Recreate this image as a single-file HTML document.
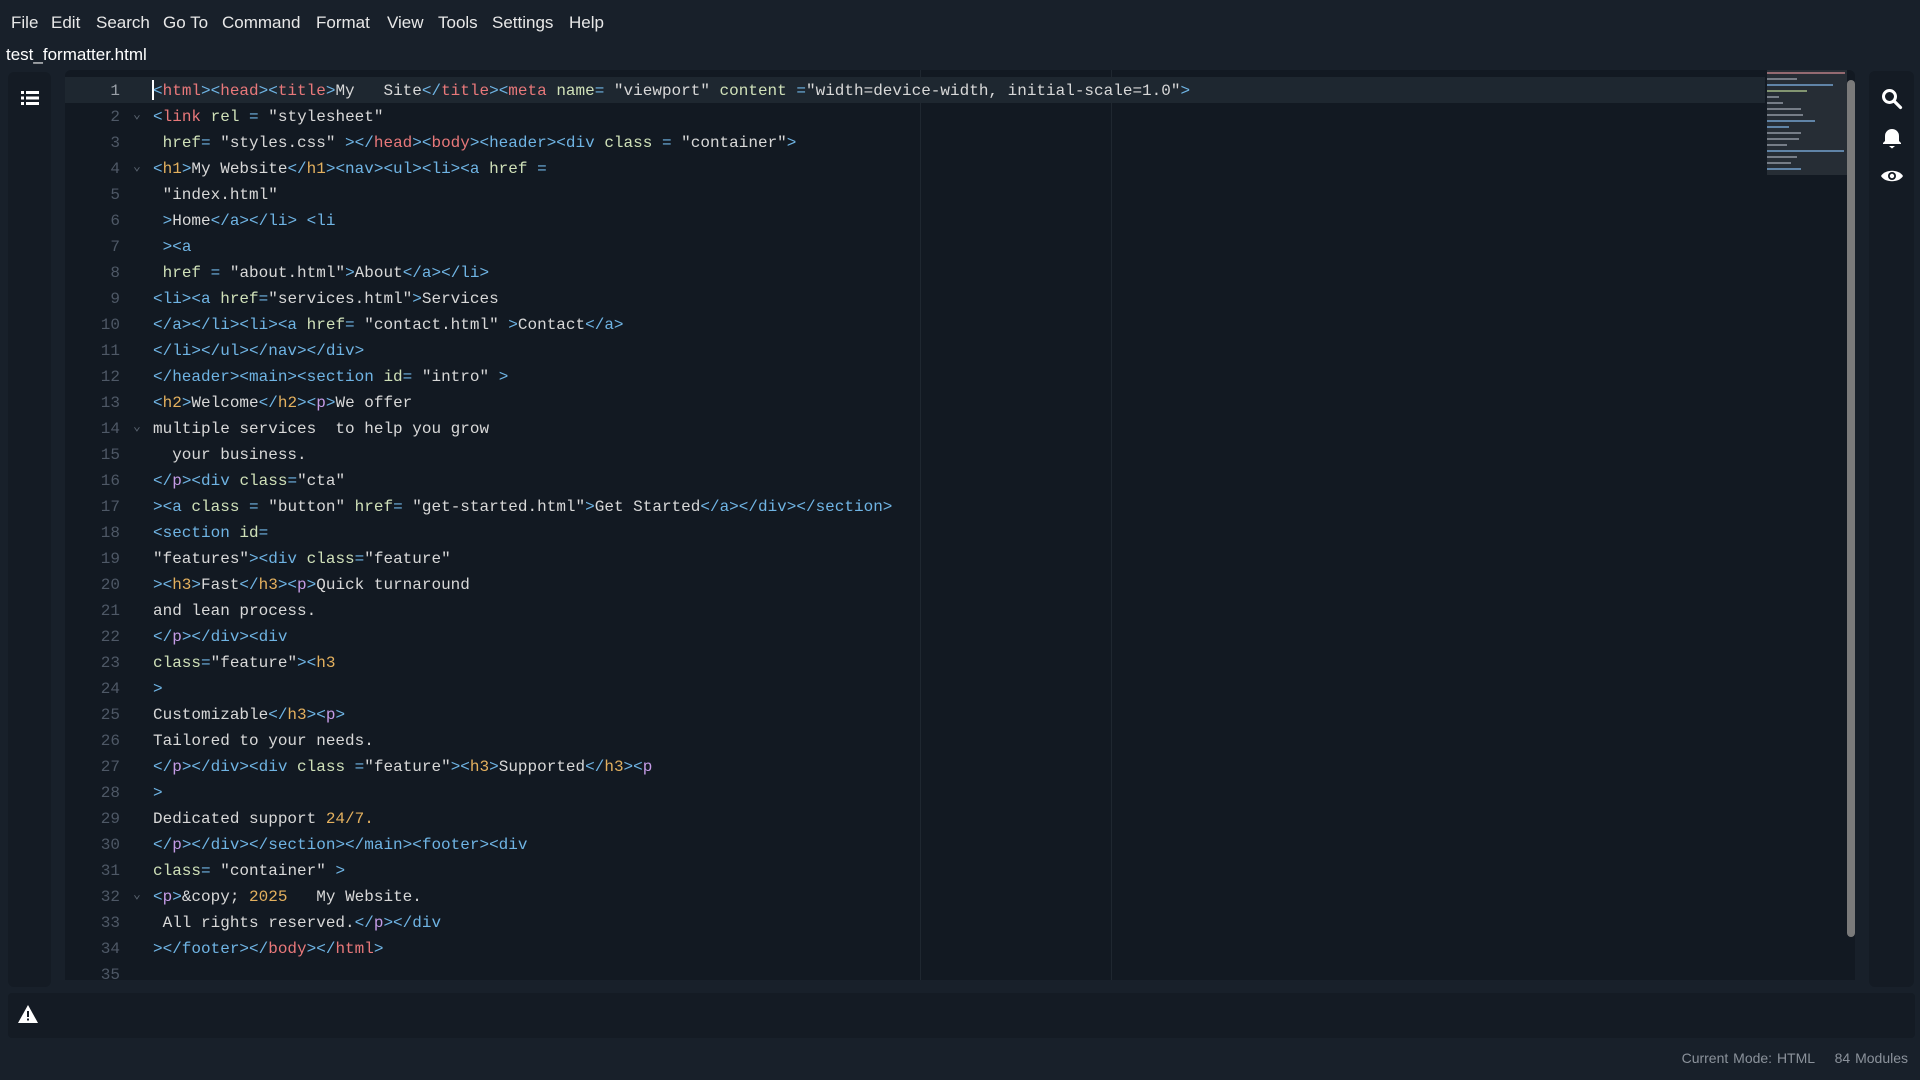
<!DOCTYPE html>
<html><head><meta charset="utf-8"><style>
*{margin:0;padding:0;box-sizing:border-box}
body{width:1920px;height:1080px;background:#18202a;overflow:hidden;position:relative;font-family:"Liberation Sans",sans-serif;color:#e6e6e6}
.m{position:absolute;top:13px;font-size:17px;color:#e8e8e8}
#fn{position:absolute;left:6px;top:45px;font-size:17px;color:#fff}
#lp{position:absolute;left:8px;top:72px;width:43px;height:915px;background:#141b24;border-radius:6px}
#ed{position:absolute;left:65px;top:70px;width:1790px;height:910px;background:#121922;border-radius:6px 6px 0 0;overflow:hidden}
#hl{position:absolute;left:0;top:7px;width:1700px;height:26px;background:#1e2730}
.ru{position:absolute;top:0;width:1px;height:910px;background:#1f2730}
#code{position:absolute;left:0;top:8px;font-family:"Liberation Mono",monospace;font-size:16px}
.l{height:26px;line-height:26px;position:relative;white-space:pre;color:#d8d8d8}
.n{position:absolute;left:0;width:55px;text-align:right;color:#4e5866}
.f{position:absolute;left:68px;top:-2px;color:#5a6470;font-size:13px}
.c{position:absolute;left:88px}
.t{color:#6fb4e4}.r{color:#e8787a}.o{color:#e3b05e}.p{color:#c49be6}.a{color:#cfe0b8}
#mm{position:absolute;left:1767px;top:70px;width:80px;height:105px;background:#262d35}
#sb{position:absolute;left:1847px;top:80px;width:8px;height:857px;background:#7a7a7a;border-radius:4px}
#rp{position:absolute;left:1869px;top:71px;width:45px;height:916px;background:#141b24;border-radius:6px}
#bp{position:absolute;left:8px;top:993px;width:1907px;height:45px;background:#141b24;border-radius:4px}
#st{position:absolute;right:12px;top:1050px;font-size:14px;color:#8b929b;word-spacing:1px}
</style></head><body>
<div class="m" style="left:11px">File</div><div class="m" style="left:51px">Edit</div><div class="m" style="left:96px">Search</div><div class="m" style="left:163px">Go To</div><div class="m" style="left:222px">Command</div><div class="m" style="left:316px">Format</div><div class="m" style="left:387px">View</div><div class="m" style="left:438px">Tools</div><div class="m" style="left:492px">Settings</div><div class="m" style="left:569px">Help</div>
<div id="fn">test_formatter.html</div>
<div id="lp"><svg style="position:absolute;left:13px;top:19px" width="18" height="14" viewBox="0 0 18 14" fill="#fff"><rect x="0" y="0" width="3" height="3"/><rect x="5" y="0" width="13" height="3"/><rect x="0" y="5.5" width="3" height="3"/><rect x="5" y="5.5" width="13" height="3"/><rect x="0" y="11" width="3" height="3"/><rect x="5" y="11" width="13" height="3"/></svg></div>
<div id="ed"><div id="hl"></div><div class="ru" style="left:855px"></div><div class="ru" style="left:1046px"></div>
<div style="position:absolute;left:87px;top:10px;width:2px;height:20px;background:#fff"></div>
<div id="code">
<div class="l"><span class="n" style="color:#9aa0a8">1</span><span class="c"><span class="t">&lt;</span><span class="r">html</span><span class="t">&gt;&lt;</span><span class="r">head</span><span class="t">&gt;&lt;</span><span class="r">title</span><span class="t">&gt;</span>My   Site<span class="t">&lt;/</span><span class="r">title</span><span class="t">&gt;&lt;</span><span class="r">meta</span> <span class="a">name</span><span class="t">=</span> "viewport" <span class="a">content</span> <span class="t">=</span>"width=device-width, initial-scale=1.0"<span class="t">&gt;</span></span></div>
<div class="l"><span class="n">2</span><span class="f">⌄</span><span class="c"><span class="t">&lt;</span><span class="r">link</span> <span class="a">rel</span> <span class="t">=</span> "stylesheet"</span></div>
<div class="l"><span class="n">3</span><span class="c"> <span class="a">href</span><span class="t">=</span> "styles.css" <span class="t">&gt;&lt;/</span><span class="r">head</span><span class="t">&gt;&lt;</span><span class="r">body</span><span class="t">&gt;&lt;header&gt;&lt;div</span> <span class="a">class</span> <span class="t">=</span> "container"<span class="t">&gt;</span></span></div>
<div class="l"><span class="n">4</span><span class="f">⌄</span><span class="c"><span class="t">&lt;</span><span class="o">h1</span><span class="t">&gt;</span>My Website<span class="t">&lt;/</span><span class="o">h1</span><span class="t">&gt;&lt;nav&gt;&lt;ul&gt;&lt;li&gt;&lt;a</span> <span class="a">href</span> <span class="t">=</span></span></div>
<div class="l"><span class="n">5</span><span class="c"> "index.html"</span></div>
<div class="l"><span class="n">6</span><span class="c"> <span class="t">&gt;</span>Home<span class="t">&lt;/a&gt;&lt;/li&gt;</span> <span class="t">&lt;li</span></span></div>
<div class="l"><span class="n">7</span><span class="c"> <span class="t">&gt;&lt;a</span></span></div>
<div class="l"><span class="n">8</span><span class="c"> <span class="a">href</span> <span class="t">=</span> "about.html"<span class="t">&gt;</span>About<span class="t">&lt;/a&gt;&lt;/li&gt;</span></span></div>
<div class="l"><span class="n">9</span><span class="c"><span class="t">&lt;li&gt;&lt;a</span> <span class="a">href</span><span class="t">=</span>"services.html"<span class="t">&gt;</span>Services</span></div>
<div class="l"><span class="n">10</span><span class="c"><span class="t">&lt;/a&gt;&lt;/li&gt;&lt;li&gt;&lt;a</span> <span class="a">href</span><span class="t">=</span> "contact.html" <span class="t">&gt;</span>Contact<span class="t">&lt;/a&gt;</span></span></div>
<div class="l"><span class="n">11</span><span class="c"><span class="t">&lt;/li&gt;&lt;/ul&gt;&lt;/nav&gt;&lt;/div&gt;</span></span></div>
<div class="l"><span class="n">12</span><span class="c"><span class="t">&lt;/header&gt;&lt;main&gt;&lt;section</span> <span class="a">id</span><span class="t">=</span> "intro" <span class="t">&gt;</span></span></div>
<div class="l"><span class="n">13</span><span class="c"><span class="t">&lt;</span><span class="o">h2</span><span class="t">&gt;</span>Welcome<span class="t">&lt;/</span><span class="o">h2</span><span class="t">&gt;&lt;</span><span class="p">p</span><span class="t">&gt;</span>We offer</span></div>
<div class="l"><span class="n">14</span><span class="f">⌄</span><span class="c">multiple services  to help you grow</span></div>
<div class="l"><span class="n">15</span><span class="c">  your business.</span></div>
<div class="l"><span class="n">16</span><span class="c"><span class="t">&lt;/</span><span class="p">p</span><span class="t">&gt;&lt;div</span> <span class="a">class</span><span class="t">=</span>"cta"</span></div>
<div class="l"><span class="n">17</span><span class="c"><span class="t">&gt;&lt;a</span> <span class="a">class</span> <span class="t">=</span> "button" <span class="a">href</span><span class="t">=</span> "get-started.html"<span class="t">&gt;</span>Get Started<span class="t">&lt;/a&gt;&lt;/div&gt;&lt;/section&gt;</span></span></div>
<div class="l"><span class="n">18</span><span class="c"><span class="t">&lt;section</span> <span class="a">id</span><span class="t">=</span></span></div>
<div class="l"><span class="n">19</span><span class="c">"features"<span class="t">&gt;&lt;div</span> <span class="a">class</span><span class="t">=</span>"feature"</span></div>
<div class="l"><span class="n">20</span><span class="c"><span class="t">&gt;&lt;</span><span class="o">h3</span><span class="t">&gt;</span>Fast<span class="t">&lt;/</span><span class="o">h3</span><span class="t">&gt;&lt;</span><span class="p">p</span><span class="t">&gt;</span>Quick turnaround</span></div>
<div class="l"><span class="n">21</span><span class="c">and lean process.</span></div>
<div class="l"><span class="n">22</span><span class="c"><span class="t">&lt;/</span><span class="p">p</span><span class="t">&gt;&lt;/div&gt;&lt;div</span></span></div>
<div class="l"><span class="n">23</span><span class="c"><span class="a">class</span><span class="t">=</span>"feature"<span class="t">&gt;&lt;</span><span class="o">h3</span></span></div>
<div class="l"><span class="n">24</span><span class="c"><span class="t">&gt;</span></span></div>
<div class="l"><span class="n">25</span><span class="c">Customizable<span class="t">&lt;/</span><span class="o">h3</span><span class="t">&gt;&lt;</span><span class="p">p</span><span class="t">&gt;</span></span></div>
<div class="l"><span class="n">26</span><span class="c">Tailored to your needs.</span></div>
<div class="l"><span class="n">27</span><span class="c"><span class="t">&lt;/</span><span class="p">p</span><span class="t">&gt;&lt;/div&gt;&lt;div</span> <span class="a">class</span> <span class="t">=</span>"feature"<span class="t">&gt;&lt;</span><span class="o">h3</span><span class="t">&gt;</span>Supported<span class="t">&lt;/</span><span class="o">h3</span><span class="t">&gt;&lt;</span><span class="p">p</span></span></div>
<div class="l"><span class="n">28</span><span class="c"><span class="t">&gt;</span></span></div>
<div class="l"><span class="n">29</span><span class="c">Dedicated support <span class="o">24/7.</span></span></div>
<div class="l"><span class="n">30</span><span class="c"><span class="t">&lt;/</span><span class="p">p</span><span class="t">&gt;&lt;/div&gt;&lt;/section&gt;&lt;/main&gt;&lt;footer&gt;&lt;div</span></span></div>
<div class="l"><span class="n">31</span><span class="c"><span class="a">class</span><span class="t">=</span> "container" <span class="t">&gt;</span></span></div>
<div class="l"><span class="n">32</span><span class="f">⌄</span><span class="c"><span class="t">&lt;</span><span class="p">p</span><span class="t">&gt;</span>&amp;copy; <span class="o">2025</span>   My Website.</span></div>
<div class="l"><span class="n">33</span><span class="c"> All rights reserved.<span class="t">&lt;/</span><span class="p">p</span><span class="t">&gt;&lt;/div</span></span></div>
<div class="l"><span class="n">34</span><span class="c"><span class="t">&gt;&lt;/footer&gt;&lt;/</span><span class="r">body</span><span class="t">&gt;&lt;/</span><span class="r">html</span><span class="t">&gt;</span></span></div>
<div class="l"><span class="n">35</span></div>
</div></div>
<div id="mm"><svg width="80" height="105"><g fill="#8a929c" opacity=".8">
<rect x="0" y="2" width="78" height="2" fill="#b07a80"/><rect x="0" y="8" width="30" height="2"/><rect x="0" y="14" width="66" height="2" fill="#6f9ac4"/><rect x="0" y="20" width="40" height="2" fill="#9ab080"/><rect x="0" y="26" width="12" height="2"/><rect x="0" y="32" width="16" height="2"/><rect x="0" y="38" width="34" height="2"/><rect x="0" y="44" width="36" height="2"/><rect x="0" y="50" width="48" height="2" fill="#6f9ac4"/><rect x="0" y="56" width="22" height="2" fill="#6f9ac4"/><rect x="0" y="62" width="34" height="2"/><rect x="0" y="68" width="32" height="2"/><rect x="0" y="74" width="20" height="2"/><rect x="0" y="80" width="77" height="2" fill="#6f9ac4"/><rect x="0" y="86" width="30" height="2"/><rect x="0" y="92" width="24" height="2"/><rect x="0" y="98" width="34" height="2" fill="#6f9ac4"/></g></svg></div>
<div id="sb"></div>
<div id="rp">
<svg style="position:absolute;left:12px;top:17px" width="22" height="22" viewBox="0 0 22 22"><circle cx="8.5" cy="8.5" r="6" fill="none" stroke="#fff" stroke-width="3"/><path d="M13 13l6.5 6.5" stroke="#fff" stroke-width="3.2" stroke-linecap="round"/></svg>
<svg style="position:absolute;left:13px;top:56px" width="20" height="22" viewBox="0 0 20 22" fill="#fff"><path d="M3 14V9a7 7 0 0 1 14 0v5l2 2v1H1v-1z"/><path d="M7 19h6l-3 2.5z"/></svg>
<svg style="position:absolute;left:11px;top:98px" width="24" height="14" viewBox="0 0 24 14"><path d="M1 7C5 0 19 0 23 7 19 14 5 14 1 7z" fill="#fff"/><circle cx="12" cy="7" r="4" fill="#141b24"/><circle cx="12" cy="7" r="2.2" fill="#fff"/></svg>
</div>
<div id="bp"><svg style="position:absolute;left:10px;top:12px" width="20" height="18" viewBox="0 0 20 18"><path d="M10 0L20 18H0z" fill="#fff"/><rect x="9" y="6" width="2" height="6" fill="#141b24"/><rect x="9" y="13.5" width="2" height="2" fill="#141b24"/></svg></div>
<div id="st">Current Mode: HTML&nbsp;&nbsp;&nbsp;&nbsp;84 Modules</div>
</body></html>
